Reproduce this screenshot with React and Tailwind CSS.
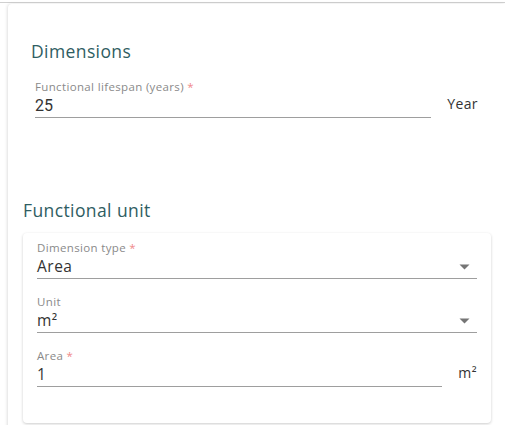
const font = { fontFamily: "'Open Sans', 'Noto Sans', sans-serif" };

function Caret() {
  return (
    <svg width="11" height="6" viewBox="0 0 11 6" className="shrink-0">
      <path d="M0.5 0.5h10L5.5 5.5z" fill="#757575" />
    </svg>
  );
}

function Field({ label, required, value, unit, select, mono, lineWidth }) {
  return (
    <div className="flex items-end">
      <div className={`flex flex-col ${lineWidth ? lineWidth : "flex-1"}`}>
        <div className="text-[11.5px] leading-[14px] tracking-[0.35px] text-[#8a8a8a]">
          {label}
          {required && <span className="text-[#f08a8a]"> *</span>}
        </div>
        <div className="flex items-center justify-between border-b border-[#9e9e9e] h-[24px]">
          <span
            className={
              mono
                ? "text-[16px] text-[#333] font-['Roboto','Liberation_Sans',sans-serif]"
                : "text-[15.5px] tracking-[0.5px] text-[#333]"
            }
          >
            {value}
          </span>
          {select && (
            <span className="mr-[7px]">
              <Caret />
            </span>
          )}
        </div>
      </div>
      {unit && (
        <span className="ml-auto mb-[4px] text-[14px] tracking-[0.4px] text-[#333]">{unit}</span>
      )}
    </div>
  );
}

export default function App() {
  return (
    <div className="w-[505px] h-[425px] overflow-hidden bg-white" style={font}>
      <div className="mt-[2px] border-t border-[#d0d0d0]" />
      <div className="ml-[8px] mt-[1px] h-[430px] rounded-tl-[4px] bg-white shadow-[-1px_0_3px_rgba(0,0,0,0.12)]">
        <div className="pl-[23px] pr-[27px] pt-[35px]">
          <h2 className="text-[17.5px] tracking-[0.4px] text-[#2f5d62] leading-[24px]">Dimensions</h2>
          <div className="mt-[17px] pl-[4px]">
            <Field
              label="Functional lifespan (years)"
              required
              value="25"
              unit="Year"
              mono
              lineWidth="w-[396px]"
            />
          </div>
        </div>
        <div className="pl-[15px] pr-[6px] mt-[80px]">
          <h2 className="text-[17.5px] tracking-[0.4px] text-[#2f5d62] leading-[24px]">Functional unit</h2>
          <div className="mt-[11px] w-[468px] rounded-[4px] bg-white shadow-[0_1px_3px_rgba(0,0,0,0.2)] px-[14px] pt-[8px] pb-[36px] flex flex-col gap-[16px]">
            <Field label="Dimension type" required value="Area" select />
            <Field label="Unit" value="m²" select />
            <Field label="Area" required value="1" unit="m²" lineWidth="w-[405px]" />
          </div>
        </div>
      </div>
    </div>
  );
}
